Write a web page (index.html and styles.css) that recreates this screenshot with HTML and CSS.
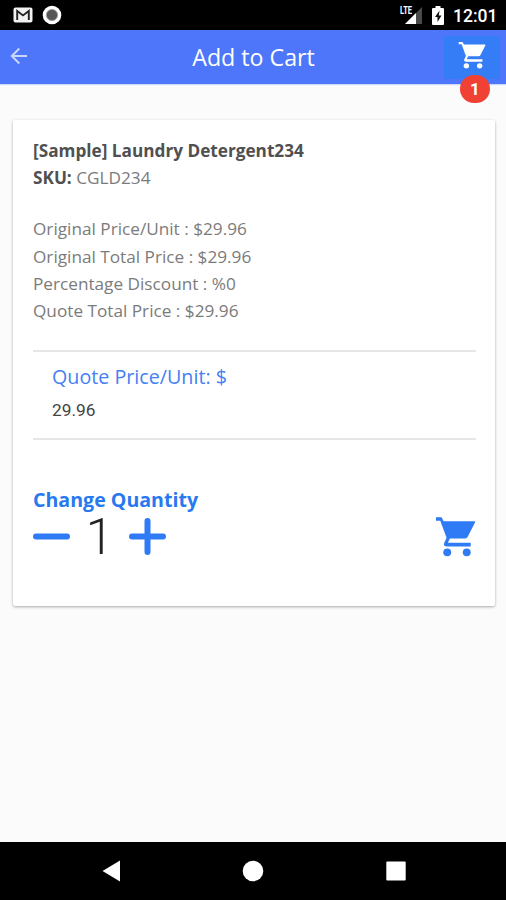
FILE: index.html
```html
<!DOCTYPE html>
<html lang="en">
<head>
    <meta charset="UTF-8">
    <meta name="viewport" content="width=device-width, initial-scale=1.0">
    <title>Add to Cart</title>
    <link rel="stylesheet" href="styles.css">
</head>
<body>
    <svg class="defs" width="0" height="0">
      <symbol id="cart" viewBox="0 0 124 124">
        <path d="M3 4h17l6 12h93q4 0 2 4l-22 43q-3 5-8 5H45l-6 13h69v11H36q-12 0-8-11l7-15L16 14H3z"/>
        <circle cx="37" cy="110" r="12"/>
        <circle cx="96" cy="110" r="12"/>
      </symbol>
    </svg>

    <div class="statusbar">
      <svg class="mail" width="20" height="16" viewBox="0 0 20 16">
        <rect x="0.5" y="0.5" width="19" height="15" rx="2" fill="#f2f2f2"/>
        <path d="M4.2 13V4l5.8 4.4L15.8 4v9" fill="none" stroke="#222" stroke-width="1.9"/>
      </svg>
      <svg class="record" width="20" height="20" viewBox="0 0 20 20">
        <circle cx="10" cy="10" r="9.3" fill="#fff"/>
        <circle cx="10" cy="10" r="5.6" fill="#555" stroke="#999" stroke-width="0.8"/>
      </svg>
      <svg class="signal" width="24" height="20" viewBox="0 0 24 20">
        <path d="M22 2v17H5z" fill="#4a4a4a"/>
        <path d="M16 8v11H5z" fill="#fff"/>
        <text x="0" y="9.3" textLength="12" lengthAdjust="spacingAndGlyphs">LTE</text>
      </svg>
      <svg class="battery" width="12" height="19" viewBox="0 0 12 19">
        <path d="M3.5 0h5v2H11q1 0 1 1v15q0 1-1 1H1q-1 0-1-1V3q0-1 1-1h2.5z" fill="#fff"/>
        <path d="M7.5 4.5L3 11h2.5v5L9.5 9.5H6.8z" fill="#111"/>
      </svg>
      <span class="time">12:01</span>
    </div>

    <div class="header">
      <svg class="back" width="18" height="18" viewBox="0 0 18 18">
        <path d="M17 9H2M9.3 1.5L1.8 9l7.5 7.5"/>
      </svg>
      <h1>Add to Cart</h1>
      <div class="cart-btn">
        <svg width="28" height="28"><use href="#cart"/></svg>
        <span class="badge">1</span>
      </div>
    </div>

    <div class="main">
      <div class="card">
        <div class="details">
          <p><b>[Sample] Laundry Detergent234</b></p>
          <p><b>SKU:</b> <span class="sku">CGLD234</span></p>
        </div>
        <div class="prices">
          <p class="unit">Original Price/Unit : $29.96</p>
          <p class="total">Original Total Price : $29.96</p>
          <p class="discount">Percentage Discount : %0</p>
          <p class="quote-total">Quote Total Price : $29.96</p>
        </div>
        <div class="quote">
          <label>Quote Price/Unit: $</label>
          <span class="value">29.96</span>
        </div>
        <h2>Change Quantity</h2>
        <div class="quantity">
          <svg class="minus" width="37" height="37" viewBox="0 0 37 37"><path d="M3 18.5h31"/></svg>
          <span class="count">1</span>
          <svg class="plus" width="37" height="37" viewBox="0 0 37 37"><path d="M3 18.5h31M18.5 3v31"/></svg>
          <svg class="add" width="41" height="41"><use href="#cart"/></svg>
        </div>
      </div>
    </div>

    <div class="navbar">
      <svg width="18" height="22" viewBox="0 0 18 22"><path d="M18 0.5v21L0.5 11z"/></svg>
      <svg width="22" height="22" viewBox="0 0 22 22"><circle cx="11" cy="11" r="10.3"/></svg>
      <svg width="20" height="20" viewBox="0 0 20 20"><rect x="0.3" y="0.5" width="19.4" height="19" rx="1"/></svg>
    </div>
</body>
</html>
```

FILE: styles.css
```css
*{
  box-sizing: border-box;
}
body{
  margin: 0;
  height: 900px;
  display: flex;
  flex-direction: column;
  background-color: #fbfbfb;
  font-family: "Open Sans", sans-serif;
  overflow: hidden;
}
h1, h2, p{
  margin: 0;
}
svg{
  display: block;
  flex-shrink: 0;
}
.defs{
  position: absolute;
}

/* status bar */
.statusbar{
  display: flex;
  align-items: center;
  height: 30px;
  padding: 0 11px 0 13px;
  background-color: #000;
  color: #fff;
}
.record{
  margin-left: 9px;
}
.signal{
  margin-left: auto;
}
.signal text{
  font: bold 10px Roboto, sans-serif;
  fill: #fff;
}
.battery{
  margin: 0 9px 0 8px;
}
.time{
  font: 500 17.5px/30px Roboto, sans-serif;
  width: 42px;
  padding-top: 2px;
  white-space: nowrap;
}

/* header */
.header{
  display: grid;
  grid-template-columns: 62px 1fr 62px;
  align-items: center;
  height: 54px;
  background-color: #4d76fa;
  box-shadow: 0 1px 1px #d0d8f8;
  color: #fff;
}
.back{
  margin: 0 0 2px 10px;
  fill: none;
  stroke: #c9d5fd;
  stroke-width: 2;
}
.header h1{
  padding-left: 1px;
  text-align: center;
  font-size: 23.2px;
  font-weight: 400;
}
.cart-btn{
  position: relative;
  width: 56px;
  height: 43px;
  padding: 5px 0 0 14px;
  background-color: #357cf7;
  fill: #fff;
}
.badge{
  position: absolute;
  left: 16px;
  top: 39px;
  width: 30px;
  height: 28px;
  border-radius: 14px;
  background-color: #f04134;
  font: bold 17px/29px Roboto, sans-serif;
  text-align: center;
}

/* card */
.main{
  flex: 1;
  padding: 36px 11px 0 13px;
}
.card{
  height: 486px;
  padding: 17px 19px 0 20px;
  border-radius: 2px;
  background-color: #fff;
  box-shadow: 0 1px 3px rgba(0,0,0,.32);
  font-size: 17.2px;
  line-height: 27.2px;
  color: #7b7b7b;
}
.card p{
  white-space: nowrap;
}
.details b{
  font-size: 17.2px;
  font-weight: 700;
  color: #505050;
}
.prices{
  margin-top: 24px;
}
.quote{
  display: flex;
  flex-direction: column;
  height: 90px;
  margin-top: 26px;
  padding: 11px 0 0 19px;
  border-top: 2px solid #e6e6e6;
  border-bottom: 2px solid #e6e6e6;
}
.quote label{
  font-size: 19.7px;
  color: #4580f2;
}
.quote .value{
  margin-top: 7px;
  font-family: Roboto, sans-serif;
  font-size: 17.3px;
  color: #444;
}
.card h2{
  margin-top: 46px;
  font-size: 19.6px;
  font-weight: 700;
  line-height: 27px;
  color: #2878f0;
}
.quantity{
  display: flex;
  align-items: center;
  height: 47px;
}
.minus, .plus{
  fill: none;
  stroke: #2f7bf5;
  stroke-width: 6;
  stroke-linecap: round;
}
.count{
  width: 59px;
  padding-top: 2px;
  text-align: center;
  font-family: Roboto, sans-serif;
  font-size: 50px;
  font-weight: 300;
  color: #222;
}
.add{
  margin-left: auto;
  fill: #2f7bf5;
}

/* navigation */
.navbar{
  display: flex;
  align-items: center;
  justify-content: space-between;
  height: 58px;
  padding: 0 100px 0 102px;
  background-color: #000;
  fill: #fff;
}
```
